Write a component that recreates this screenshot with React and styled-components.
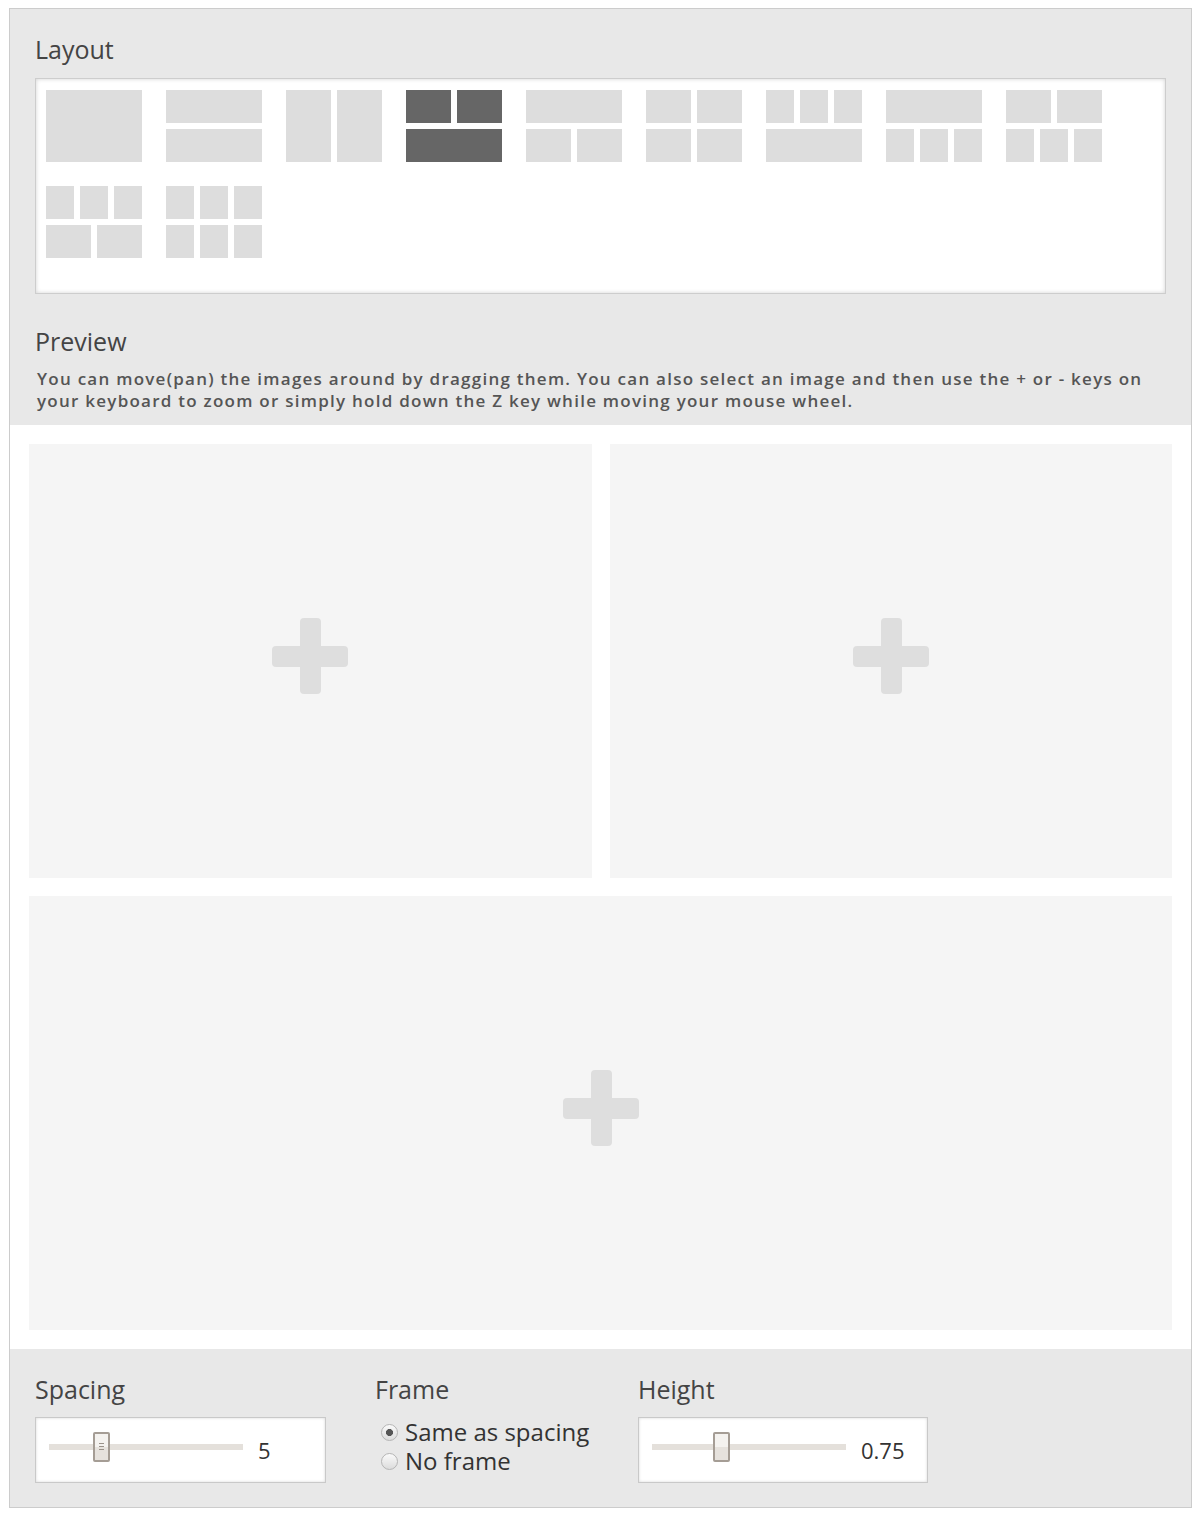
import React from "react";
import styled, { createGlobalStyle } from "styled-components";

const Global = createGlobalStyle`
  body {
    margin: 8px 8px 8px 9px;
    font-family: "Open Sans", "Liberation Sans", sans-serif;
    background: #fff;
  }
`;

const Frame = styled.div`
  border: 1px solid #cccccc;
  background: #fff;
`;

const GraySection = styled.section`
  background: #e8e8e8;
  padding: ${(p) => p.$pad};
`;

const Heading = styled.h2`
  margin: ${(p) => p.$margin || "0"};
  font-size: 25px;
  line-height: 32px;
  font-weight: 400;
  color: #444;
`;

const LayoutBox = styled.div`
  margin-top: 13px;
  background: #fff;
  border: 1px solid #cdcdcd;
  box-shadow: inset 0 0 4px rgba(0, 0, 0, 0.18);
  padding: 11px 10px 35px 10px;
  display: flex;
  flex-wrap: wrap;
  gap: 24px;
`;

const Icon = styled.div`
  width: 96px;
  height: 72px;
  display: flex;
  flex-direction: column;
  gap: 6px;
  cursor: pointer;
`;

const IconRow = styled.div`
  flex: 1;
  display: flex;
  gap: 6px;
`;

const IconCell = styled.div`
  flex: 1;
  background: ${(p) => (p.$active ? "#666666" : "#dddddd")};
`;

const Desc = styled.p`
  margin: 11px 0 0 2px;
  font-size: 17px;
  line-height: 22px;
  font-weight: 600;
  letter-spacing: 1.25px;
  color: #555;
`;

const PreviewArea = styled.div`
  padding: 19px;
  display: grid;
  grid-template-columns: 1fr 1fr;
  grid-auto-rows: 434px;
  gap: 18px;
`;

const Cell = styled.div`
  background: #f5f5f5;
  grid-column: ${(p) => (p.$wide ? "1 / span 2" : "auto")};
  display: flex;
  align-items: center;
  justify-content: center;
  cursor: pointer;
`;

const Plus = styled.div`
  position: relative;
  width: 76px;
  height: 76px;
  margin-bottom: 10px;
  &::before,
  &::after {
    content: "";
    position: absolute;
    background: #dedede;
    border-radius: 4px;
  }
  &::before {
    left: 28px;
    top: 0;
    width: 21px;
    height: 76px;
  }
  &::after {
    left: 0;
    top: 28px;
    width: 76px;
    height: 21px;
  }
`;

const Controls = styled.div`
  display: flex;
  gap: 49px;
`;

const Control = styled.div`
  width: ${(p) => p.$w}px;
  display: flex;
  flex-direction: column;
`;

const SliderBox = styled.div`
  margin-top: 12px;
  height: 66px;
  box-sizing: border-box;
  background: #fff;
  border: 1px solid #c9c9c9;
  box-shadow: inset 0 0 3px rgba(0, 0, 0, 0.16);
  display: flex;
  align-items: center;
  padding-left: 13px;
`;

const Track = styled.div`
  position: relative;
  width: 194px;
  height: 6px;
  background: #e4e0db;
  margin-top: -6px;
`;

const Handle = styled.div`
  position: absolute;
  top: -12px;
  width: 17px;
  height: 30px;
  box-sizing: border-box;
  border: 2px solid #a59d95;
  border-radius: 2px;
  background: linear-gradient(#f4f2ef 0%, #f4f2ef 50%, #e6e2dd 50%, #e6e2dd 100%);
  &::after {
    content: "";
    display: ${(p) => (p.$grip ? "block" : "none")};
    position: absolute;
    left: 4px;
    top: 9px;
    width: 5px;
    height: 7px;
    background: repeating-linear-gradient(#9a928a 0 1px, transparent 1px 3px);
  }
`;

const Value = styled.span`
  margin-left: 15px;
  font-size: 22px;
  color: #333;
`;

const RadioList = styled.div`
  margin-top: 12px;
  display: flex;
  flex-direction: column;
`;

const RadioLabel = styled.label`
  display: flex;
  align-items: center;
  gap: 7px;
  margin-left: 6px;
  font-size: 24px;
  line-height: 29px;
  color: #333;
  white-space: nowrap;
  cursor: pointer;
`;

const RadioDot = styled.span`
  flex: none;
  width: 17px;
  height: 17px;
  box-sizing: border-box;
  border-radius: 50%;
  border: 1px solid #b5b5b5;
  background: ${(p) =>
    p.$on
      ? "radial-gradient(circle, #555 0 3.2px, transparent 3.8px), linear-gradient(#fafafa, #dcdcdc)"
      : "linear-gradient(#fafafa, #dcdcdc)"};
  margin-top: 2px;
`;

const layouts = [
  [1],
  [1, 1],
  [2],
  [2, 1],
  [1, 2],
  [2, 2],
  [3, 1],
  [1, 3],
  [2, 3],
  [3, 2],
  [3, 3],
];

export default function App() {
  return (
    <>
      <Global />
      <Frame>
        <GraySection $pad="24px 25px 13px 25px">
          <Heading>Layout</Heading>
          <LayoutBox>
            {layouts.map((rows, i) => (
              <Icon key={i}>
                {rows.map((n, r) => (
                  <IconRow key={r}>
                    {Array.from({ length: n }).map((_, c) => (
                      <IconCell key={c} $active={i === 3} />
                    ))}
                  </IconRow>
                ))}
              </Icon>
            ))}
          </LayoutBox>
          <Heading $margin="31px 0 0 0">Preview</Heading>
          <Desc>
            You can move(pan) the images around by dragging them. You can also
            select an image and then use the + or - keys on your keyboard to
            zoom or simply hold down the Z key while moving your mouse wheel.
          </Desc>
        </GraySection>
        <PreviewArea>
          <Cell>
            <Plus />
          </Cell>
          <Cell>
            <Plus />
          </Cell>
          <Cell $wide>
            <Plus />
          </Cell>
        </PreviewArea>
        <GraySection $pad="24px 25px 24px 25px">
          <Controls>
            <Control $w={291}>
              <Heading>Spacing</Heading>
              <SliderBox>
                <Track>
                  <Handle $grip style={{ left: 44 }} />
                </Track>
                <Value>5</Value>
              </SliderBox>
            </Control>
            <Control $w={214}>
              <Heading>Frame</Heading>
              <RadioList>
                <RadioLabel>
                  <RadioDot $on />
                  Same as spacing
                </RadioLabel>
                <RadioLabel>
                  <RadioDot />
                  No frame
                </RadioLabel>
              </RadioList>
            </Control>
            <Control $w={290}>
              <Heading>Height</Heading>
              <SliderBox>
                <Track>
                  <Handle style={{ left: 61 }} />
                </Track>
                <Value>0.75</Value>
              </SliderBox>
            </Control>
          </Controls>
        </GraySection>
      </Frame>
    </>
  );
}
